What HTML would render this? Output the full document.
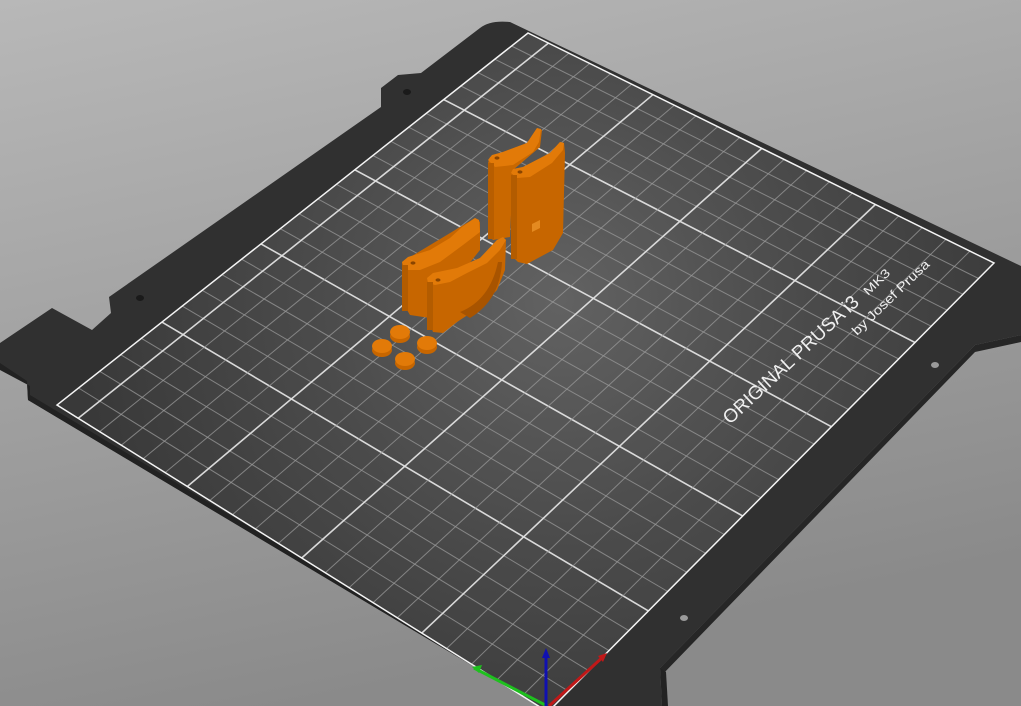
<!DOCTYPE html>
<html><head><meta charset="utf-8"><style>
html,body{margin:0;padding:0;width:1021px;height:706px;overflow:hidden;background:#a4a4a4}
svg{display:block}
</style></head><body>
<svg id="s" width="1021" height="706" viewBox="0 0 1021 706" xmlns="http://www.w3.org/2000/svg">
<defs>
<linearGradient id="bg" x1="0" y1="0" x2="0.3" y2="1">
<stop offset="0" stop-color="#b8b8b8"/><stop offset="1" stop-color="#8a8a8a"/>
</linearGradient>
<radialGradient id="surf" gradientUnits="userSpaceOnUse" cx="560" cy="300" r="480">
<stop offset="0" stop-color="#626262"/><stop offset="0.5" stop-color="#4b4b4b"/><stop offset="1" stop-color="#393939"/>
</radialGradient>
<clipPath id="gc"><polygon points="548,712 994,263 528,33 57,405"/></clipPath>
</defs>
<rect width="1021" height="706" fill="url(#bg)"/>
<path d="M480,28 Q490,20 510,22 L1000,256 L1021,266 L1021,335 L975,345 L660,668 L662,706 L540,706 L28,400 L27,383 L0,365 L0,343 L52,308 L92,330 L111,313 L109,297 L381,107 L381,88 L398,75 L421,73 Z" fill="#303030"/>
<polygon points="0,363 27,381 28,400 540,706 548,706 30,395 30,386 0,370" fill="#222"/>
<polygon points="975,345 1021,335 1021,342 975,352 662,675 660,668" fill="#262626"/>
<polygon points="660,668 662,706 668,706 666,672" fill="#222"/>
<ellipse cx="407" cy="92" rx="4" ry="3" fill="#1a1a1a"/>
<ellipse cx="140" cy="298" rx="4" ry="3" fill="#1a1a1a"/>
<ellipse cx="935" cy="365" rx="4" ry="3" fill="#9a9a9a"/>
<ellipse cx="684" cy="618" rx="4" ry="3" fill="#9a9a9a"/>
<polygon points="548,712 994,263 528,33 57,405" fill="url(#surf)"/>
<g id="grid" clip-path="url(#gc)"></g>
<polygon points="548,712 994,263 528,33 57,405" fill="none" stroke="#f4f4f4" stroke-width="1.5"/>
<g fill="#f0f0f0" font-family="Liberation Sans, sans-serif">
<text x="730" y="425" font-size="19" textLength="178" lengthAdjust="spacingAndGlyphs" transform="rotate(-43 730 425)">ORIGINAL PRUSA i3</text>
<text x="868" y="296" font-size="12" textLength="32" lengthAdjust="spacingAndGlyphs" transform="rotate(-44 868 296)">MK3</text>
<text x="857" y="336" font-size="13" textLength="102" lengthAdjust="spacingAndGlyphs" transform="rotate(-44 857 336)">by Josef Prusa</text>
</g>
<g>
<polygon points="488,163 490,157 500,153 527,143 537,128 542,130 540,147 513,170 510,237 493,240 490,237" fill="#c96800"/>
<polygon points="488,160 492,155 503,152 527,143 537,128 541,129 539,142 533,152 513,165 495,167" fill="#e27a08"/>
<rect x="488" y="163" width="6" height="76" fill="#b85e00"/>
<ellipse cx="497" cy="158" rx="2.5" ry="1.6" fill="#8a4500"/>
<polygon points="511,173 513,169 523,167 550,153 560,142 564,143 565,153 563,233 553,250 527,264 518,262 513,257" fill="#c76600"/>
<polygon points="511,173 513,169 523,167 550,153 560,142 564,143 563,150 552,163 530,177 517,178" fill="#e27a08"/>
<rect x="511" y="175" width="6" height="84" fill="#b35c00"/>
<ellipse cx="520" cy="172" rx="2.5" ry="1.6" fill="#8a4500"/>
<polygon points="532,224 540,220 540,228 532,232" fill="#e48a20"/>
<polygon points="402,262 475,218 480,222 480,250 440,300 430,318 410,315 404,305" fill="#c76600"/>
<polygon points="402,262 408,257 430,250 450,238 462,227 475,218 479,220 480,232 463,245 440,262 420,270 405,270" fill="#e27a08"/>
<rect x="402" y="265" width="6" height="46" fill="#b35c00"/>
<ellipse cx="413" cy="263" rx="2.5" ry="1.6" fill="#8a4500"/>
<polygon points="427,278 433,273 457,268 480,258 497,240 503,237 506,240 505,270 497,290 480,307 457,322 443,333 433,332 430,323" fill="#c76600"/>
<path d="M460,312 Q490,300 498,262 L502,262 Q500,300 470,318 Z" fill="#a85400"/>
<polygon points="427,278 433,273 457,268 480,258 497,240 503,237 506,240 500,250 487,263 467,273 450,282 435,285 428,283" fill="#e27a08"/>
<rect x="427" y="282" width="6" height="48" fill="#b35c00"/>
<ellipse cx="438" cy="280" rx="2.5" ry="1.6" fill="#8a4500"/>
<g fill="#c76600">
<ellipse cx="400" cy="336" rx="10" ry="7"/><ellipse cx="427" cy="347" rx="10" ry="7"/>
<ellipse cx="382" cy="350" rx="10" ry="7"/><ellipse cx="405" cy="363" rx="10" ry="7"/>
</g>
<g fill="#e27a08">
<ellipse cx="400" cy="332" rx="10" ry="7"/><ellipse cx="427" cy="343" rx="10" ry="7"/>
<ellipse cx="382" cy="346" rx="10" ry="7"/><ellipse cx="405" cy="359" rx="10" ry="7"/>
</g>
</g>
<line x1="547" y1="706" x2="474" y2="668" stroke="#1ec01e" stroke-width="3"/>
<polygon points="472,667 482,665 479,673" fill="#1ec01e"/>
<line x1="549" y1="706" x2="604" y2="656" stroke="#c01818" stroke-width="3"/>
<polygon points="607,653 598,656 603,662" fill="#c01818"/>
<line x1="546" y1="706" x2="546" y2="654" stroke="#1010b0" stroke-width="3"/>
<polygon points="546,648 542,658 550,658" fill="#1010b0"/>
</svg>
<script>
(function(){
var P=[[548,712],[994,263],[528,33],[57,405]];
var x0=P[0][0],y0=P[0][1],x1=P[1][0],y1=P[1][1],x2=P[2][0],y2=P[2][1],x3=P[3][0],y3=P[3][1];
var sx=x0-x1+x2-x3,sy=y0-y1+y2-y3,dx1=x1-x2,dx2=x3-x2,dy1=y1-y2,dy2=y3-y2;
var den=dx1*dy2-dx2*dy1,g=(sx*dy2-dx2*sy)/den,h=(dx1*sy-sx*dy1)/den;
var a=x1-x0+g*x1,b=x3-x0+h*x3,c=x0,d=y1-y0+g*y1,e=y3-y0+h*y3,f=y0;
function m(u,v){var w=g*u+h*v+1;return [(a*u+b*v+c)/w,(d*u+e*v+f)/w];}
var G=document.getElementById('grid'),html='';
function L(p,q,maj){html+='<line x1="'+p[0].toFixed(1)+'" y1="'+p[1].toFixed(1)+'" x2="'+q[0].toFixed(1)+'" y2="'+q[1].toFixed(1)+'" stroke="'+(maj?'#e2e2e2':'#9a9a9a')+'" stroke-width="'+(maj?1.6:1)+'" stroke-opacity="'+(maj?0.95:0.75)+'"/>';}
for(var i=1;i<25;i++){var u=i/25;L(m(u,0),m(u,1),i%5==0);}
for(var j=1;j<21;j++){var v=j/21;L(m(0,v),m(1,v),j%5==0);}
G.innerHTML=html;
})();
</script>
</body></html>
